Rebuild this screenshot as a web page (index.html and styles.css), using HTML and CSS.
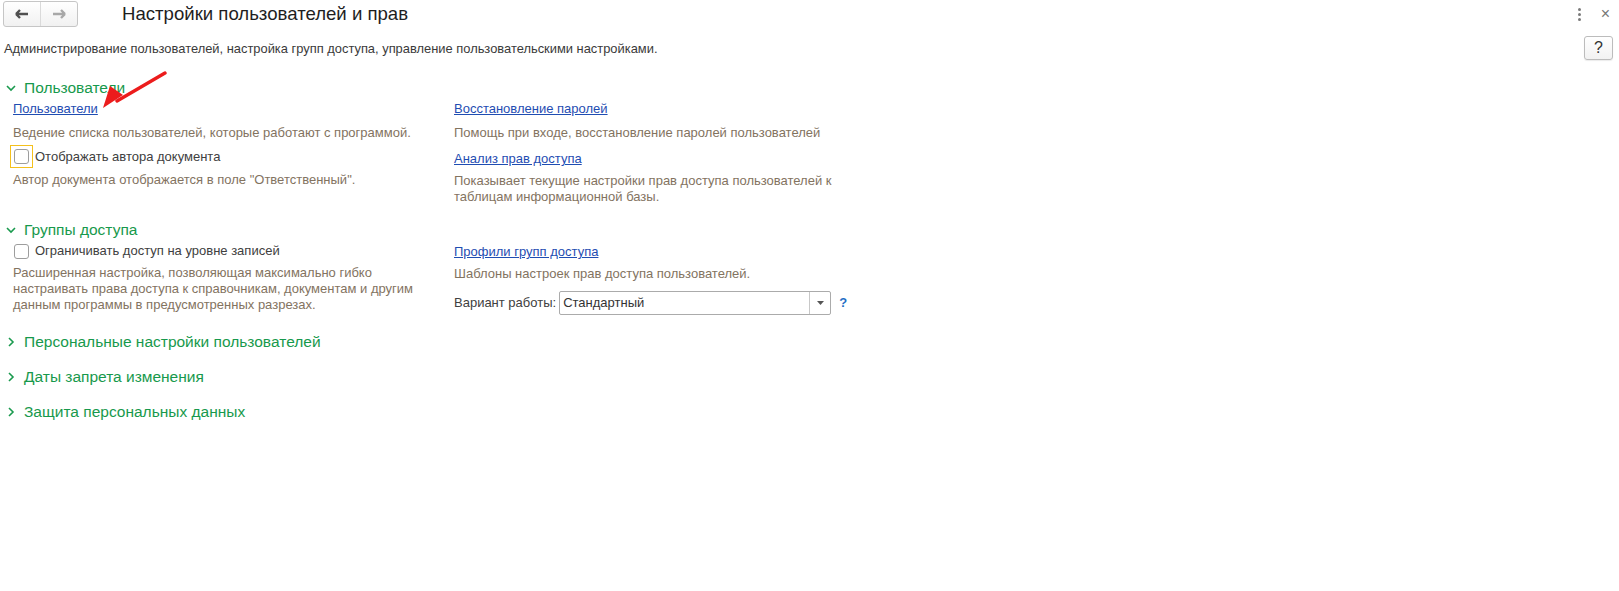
FILE: index.html
```html
<!DOCTYPE html>
<html lang="ru">

<head>
	<meta charset="utf-8">
	<title>Настройки пользователей и прав</title>
	<link rel="stylesheet" href="styles.css">
</head>

<body>
	<!-- Top bar -->
	<div class="topbar">
		<div class="nav">
			<span class="nav-btn"><svg width="14" height="10" viewBox="0 0 14 10"><path d="M1 5h12M1 5l4-4M1 5l4 4" stroke="#505050" stroke-width="2.4" fill="none"/></svg></span>
			<span class="nav-btn"><svg width="14" height="10" viewBox="0 0 14 10"><path d="M13 5H1M13 5L9 1M13 5L9 9" stroke="#a8a8a8" stroke-width="2.4" fill="none"/></svg></span>
		</div>
		<h1 class="title">Настройки пользователей и прав</h1>
		<div class="win-actions">
			<span class="dots"><i></i><i></i><i></i></span>
			<span class="close">&#215;</span>
		</div>
	</div>

	<!-- Subtitle -->
	<div class="subbar">
		<p class="subtitle">Администрирование пользователей, настройка групп доступа, управление пользовательскими настройками.</p>
		<span class="help-btn">?</span>
	</div>

	<!-- Пользователи -->
	<div class="section">
		<div class="section-head"><svg class="chev" width="10" height="7" viewBox="0 0 10 7"><path d="M1 1l4 4 4-4" stroke="#1a9a4e" stroke-width="1.6" fill="none"/></svg>Пользователи</div>
		<div class="cols">
			<div class="col">
				<a class="link" href="#">Пользователи</a>
				<p class="note n8">Ведение списка пользователей, которые работают с программой.</p>
				<label class="check focused"><span class="box-wrap"><span class="box"></span></span>Отображать автора документа</label>
				<p class="note n4">Автор документа отображается в поле "Ответственный".</p>
			</div>
			<div class="col">
				<a class="link" href="#">Восстановление паролей</a>
				<p class="note n8">Помощь при входе, восстановление паролей пользователей</p>
				<a class="link l10" href="#">Анализ прав доступа</a>
				<p class="note n6">Показывает текущие настройки прав доступа пользователей к<br>таблицам информационной базы.</p>
			</div>
		</div>
	</div>

	<!-- Группы доступа -->
	<div class="section s2">
		<div class="section-head"><svg class="chev" width="10" height="7" viewBox="0 0 10 7"><path d="M1 1l4 4 4-4" stroke="#1a9a4e" stroke-width="1.6" fill="none"/></svg>Группы доступа</div>
		<div class="cols">
			<div class="col">
				<label class="check plain"><span class="box-wrap"><span class="box"></span></span>Ограничивать доступ на уровне записей</label>
				<p class="note n6">Расширенная настройка, позволяющая максимально гибко<br>настраивать права доступа к справочникам, документам и другим<br>данным программы в предусмотренных разрезах.</p>
			</div>
			<div class="col">
				<a class="link l-top" href="#">Профили групп доступа</a>
				<p class="note n6">Шаблоны настроек прав доступа пользователей.</p>
				<div class="field">
					<span class="field-label">Вариант работы:</span>
					<span class="select"><span class="select-text">Стандартный</span><span class="select-btn"><svg width="7" height="4" viewBox="0 0 7 4"><path d="M0 0h7L3.5 4z" fill="#555"/></svg></span></span>
					<span class="field-help">?</span>
				</div>
			</div>
		</div>
	</div>

	<!-- Collapsed groups -->
	<div class="section collapsed s3">
		<div class="section-head"><svg class="chev-r" width="7" height="10" viewBox="0 0 7 10"><path d="M1 1l4 4-4 4" stroke="#1a9a4e" stroke-width="1.6" fill="none"/></svg>Персональные настройки пользователей</div>
	</div>
	<div class="section collapsed">
		<div class="section-head"><svg class="chev-r" width="7" height="10" viewBox="0 0 7 10"><path d="M1 1l4 4-4 4" stroke="#1a9a4e" stroke-width="1.6" fill="none"/></svg>Даты запрета изменения</div>
	</div>
	<div class="section collapsed">
		<div class="section-head"><svg class="chev-r" width="7" height="10" viewBox="0 0 7 10"><path d="M1 1l4 4-4 4" stroke="#1a9a4e" stroke-width="1.6" fill="none"/></svg>Защита персональных данных</div>
	</div>

	<!-- Red annotation arrow -->
	<svg class="pointer" width="70" height="40" viewBox="0 0 70 40">
		<path d="M64 2L16 30" stroke="#ec1c1c" stroke-width="3.4" stroke-linecap="round"/>
		<path d="M2 37L22 24L9 15z" fill="#ec1c1c"/>
	</svg>
</body>

</html>
```

FILE: styles.css
```css
/* Base page */
body {
	margin: 0;
	font-family: "Liberation Sans", Arial, sans-serif;
	font-size: 13px;
	color: #404040;
	background: #fff;
	position: relative;
}

p {
	margin: 0;
}

/* Top bar with navigation and title */
.topbar {
	display: flex;
	align-items: center;
	height: 28px;
	padding-left: 3px;
}

.nav {
	display: flex;
	height: 24px;
	border: 1px solid #c6c6c6;
	border-radius: 3px;
	background: linear-gradient(#ffffff, #f1f1f1);
	margin-top: -1px;
}

.nav-btn {
	width: 36px;
	display: flex;
	align-items: center;
	justify-content: center;
}

.nav-btn + .nav-btn {
	border-left: 1px solid #dadada;
}

.title {
	margin: 0 0 0 44px;
	font-size: 18.6px;
	font-weight: normal;
	color: #1e1e1e;
}

.win-actions {
	margin-left: auto;
	display: flex;
	align-items: center;
	gap: 20px;
	padding-right: 9px;
}

.dots {
	display: flex;
	flex-direction: column;
	gap: 2px;
}

.dots i {
	width: 3px;
	height: 3px;
	background: #7a7a7a;
	border-radius: 50%;
}

.close {
	font-size: 16px;
	color: #777;
}

/* Subtitle row */
.subbar {
	display: flex;
	align-items: center;
	justify-content: space-between;
	height: 24px;
	margin-top: 8px;
	padding: 0 6px 0 4px;
}

.subtitle {
	color: #3a3a3a;
	font-size: 12.9px;
}

.help-btn {
	width: 27px;
	height: 22px;
	border: 1px solid #bcbcbc;
	border-radius: 3px;
	background: linear-gradient(#ffffff, #f2f2f2);
	box-shadow: 0 1px 1px rgba(0, 0, 0, 0.08);
	display: flex;
	align-items: center;
	justify-content: center;
	font-size: 16px;
	color: #333;
}

/* Sections */
.section {
	margin-top: 18px;
}

.section.s2 {
	margin-top: 15px;
}

.section.s3 {
	margin-top: 17px;
}

.section.collapsed + .section.collapsed {
	margin-top: 15px;
}

.section-head {
	display: flex;
	align-items: center;
	height: 20px;
	padding-left: 6px;
	font-size: 15.5px;
	color: #17994c;
}

.chev {
	margin-right: 8px;
}

.chev-r {
	margin: 0 9px 0 2px;
}

.cols {
	display: grid;
	grid-template-columns: 441px 440px;
	padding-left: 13px;
	margin-top: 3px;
}

.col {
	display: flex;
	flex-direction: column;
	align-items: flex-start;
	line-height: 16px;
}

/* Links and notes */
.link {
	color: #1f4db2;
	text-decoration: underline;
}

.l10 {
	margin-top: 10px;
}

.l-top {
	margin-top: 1px;
}

.note {
	color: #83735f;
}

.n8 {
	margin-top: 8px;
}

.n6 {
	margin-top: 6px;
}

.n4 {
	margin-top: 4px;
}

/* Checkboxes */
.check {
	display: flex;
	align-items: center;
	gap: 2px;
	margin-left: -3px;
	color: #404040;
}

.focused {
	margin-top: 4px;
}

.box-wrap {
	width: 21px;
	height: 21px;
	border: 1px solid transparent;
	display: flex;
	align-items: center;
	justify-content: center;
}

.focused .box-wrap {
	border-color: #f4c01c;
}

.plain {
	margin-top: -1px;
	margin-bottom: -1px;
}

.plain .box-wrap {
	height: 16px;
}

.box {
	width: 13px;
	height: 13px;
	border: 1px solid #9d9d9d;
	border-radius: 3px;
	background: #fff;
}

/* Select field */
.field {
	display: flex;
	align-items: center;
	margin-top: 9px;
}

.field-label {
	margin-right: 3px;
}

.select {
	display: flex;
	width: 270px;
	height: 22px;
	border: 1px solid #ababab;
	border-radius: 2px;
	background: #fff;
}

.select-text {
	flex: 1;
	padding-left: 3px;
	line-height: 22px;
	color: #333;
}

.select-btn {
	width: 20px;
	border-left: 1px solid #c8c8c8;
	display: flex;
	align-items: center;
	justify-content: center;
}

.field-help {
	margin-left: 8px;
	color: #1f6fc5;
	font-weight: bold;
}

/* Annotation arrow */
.pointer {
	position: absolute;
	left: 101px;
	top: 71px;
}
```
